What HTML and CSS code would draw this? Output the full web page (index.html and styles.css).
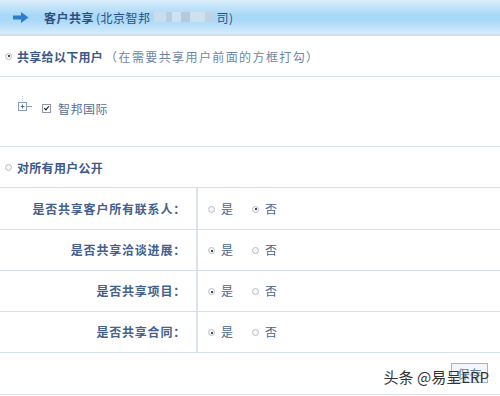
FILE: index.html
```html
<!DOCTYPE html>
<html lang="zh-CN">
<head>
  <meta charset="UTF-8">
  <title>客户共享</title>
  <link rel="stylesheet" href="styles.css">
</head>
<body>
  <div class="header">
    <svg class="arrow" width="16" height="11" viewBox="0 0 16 11">
      <path d="M0 3.5 H8 V0 L15.5 5.5 L8 11 V7.5 H0 Z" fill="#2d7dcc"/>
    </svg>
    <span class="title"><b>客户共享</b>(北京智邦<span class="blur"></span>司)</span>
  </div>

  <div class="opt-row">
    <span class="radio on"></span>
    <span class="opt-label">共享给以下用户</span>
    <span class="hint">（在需要共享用户前面的方框打勾）</span>
  </div>

  <div class="tree">
    <svg class="node" width="22" height="22" viewBox="0 0 22 22">
      <path d="M6.5 0 V6" stroke="#b8c4d4" stroke-dasharray="1 1"/>
      <rect x="2.5" y="6.5" width="8" height="8" fill="#fff" stroke="#8a9bb5"/>
      <path d="M4.5 10.5 H8.5 M6.5 8.5 V12.5" stroke="#5a6f8f"/>
      <path d="M11 10.5 H16" stroke="#8a9bb5"/>
    </svg>
    <span class="check"></span>
    <span class="tree-text">智邦国际</span>
  </div>

  <div class="opt-row">
    <span class="radio"></span>
    <span class="opt-label">对所有用户公开</span>
  </div>

  <table class="grid">
    <tr>
      <th>是否共享客户所有联系人：</th>
      <td><span class="radio"></span>是<span class="radio on gap"></span>否</td>
    </tr>
    <tr>
      <th>是否共享洽谈进展：</th>
      <td><span class="radio on"></span>是<span class="radio gap"></span>否</td>
    </tr>
    <tr>
      <th>是否共享项目：</th>
      <td><span class="radio on"></span>是<span class="radio gap"></span>否</td>
    </tr>
    <tr>
      <th>是否共享合同：</th>
      <td><span class="radio on"></span>是<span class="radio gap"></span>否</td>
    </tr>
  </table>

  <div class="footer">
    <button class="save">保存</button>
    <span class="mark">头条 @易呈ERP</span>
  </div>
</body>
</html>
```

FILE: styles.css
```css
body {
  margin: 0;
  background: #fff;
  font-family: "Noto Sans CJK SC", "Noto Sans", sans-serif;
  font-size: 12px;
  color: #44608a;
}
.header {
  height: 34px;
  display: flex;
  align-items: center;
  border-bottom: 2px solid #d3dee8;
  background: linear-gradient(#dbeefc, #a7d8f7 45%, #a9d9f7 60%, #d6ecfc);
}
.arrow {
  margin: 0 15px 0 13px;
}
.title {
  font-size: 12px;
  color: #2f4f7f;
  display: flex;
  align-items: center;
  letter-spacing: 0.5px;
}
.title b {
  margin-right: 2px;
}
.blur {
  display: inline-block;
  width: 60px;
  height: 10px;
  margin: 0 3px;
  background: linear-gradient(90deg, #c9ddee 0 20%, #b6cde3 20% 30%, #d0e2f2 30% 45%, #b3c9e0 45% 60%, #cfe0ef 60% 85%, #bed3e8 85%);
}
.opt-row {
  height: 40px;
  display: flex;
  align-items: center;
  padding-left: 5px;
  border-bottom: 1px solid #d6dfe9;
}
.opt-label {
  font-weight: bold;
  color: #3d5987;
  margin-left: 5px;
  letter-spacing: 0.3px;
}
.hint {
  color: #6f86a8;
  margin-left: 2px;
  letter-spacing: 1.4px;
}
.radio {
  display: inline-block;
  width: 7px;
  height: 7px;
  border-radius: 50%;
  border: 1px solid #b9bfc7;
  background: #f4f5f7;
  position: relative;
  box-sizing: border-box;
}
.radio.on::after {
  content: "";
  position: absolute;
  left: 1.5px;
  top: 1.5px;
  width: 2px;
  height: 2px;
  border-radius: 50%;
  background: #111;
}
.tree {
  height: 62px;
  display: flex;
  align-items: center;
  padding-left: 16px;
  padding-bottom: 7px;
  border-bottom: 1px solid #d6dfe9;
}
.node {
  margin-top: -3px;
}
.check {
  display: inline-block;
  width: 7px;
  height: 7px;
  border: 1px solid #8d97a5;
  margin-left: 4px;
  position: relative;
}
.check::after {
  content: "";
  position: absolute;
  left: 1.5px;
  top: 0;
  width: 2px;
  height: 4px;
  border: solid #111;
  border-width: 0 1.5px 1.5px 0;
  transform: rotate(40deg);
}
.tree-text {
  margin-left: 7px;
  color: #556f96;
  letter-spacing: 0.5px;
}
.grid {
  width: 100%;
  border-collapse: collapse;
}
.grid tr {
  height: 41px;
  border-bottom: 1px solid #d6dfe9;
}
.grid th {
  width: 197px;
  box-sizing: border-box;
  text-align: right;
  padding-right: 10px;
  font-weight: bold;
  color: #44608c;
  letter-spacing: 0.8px;
  border-right: 2px solid #dbe2ea;
}
.grid td {
  padding-left: 10px;
  color: #4a6590;
}
.grid td .radio {
  margin-right: 6px;
  vertical-align: 1px;
}
.grid td .gap {
  margin-left: 19px;
}
.footer {
  height: 41px;
  display: flex;
  justify-content: flex-end;
  align-items: center;
  padding-right: 12px;
  border-bottom: 1px solid #d6dfe9;
  position: relative;
}
.save {
  font-family: inherit;
  font-size: 12px;
  color: #5d7aa3;
  background: #f3f6fa;
  border: 1px solid #a9b5c6;
  padding: 1px 4px;
  height: 20px;
  width: 37px;
}
.mark {
  position: absolute;
  right: 11px;
  top: 13px;
  font-size: 15px;
  color: #333;
  text-shadow: 0 0 1px #fff;
}
```
